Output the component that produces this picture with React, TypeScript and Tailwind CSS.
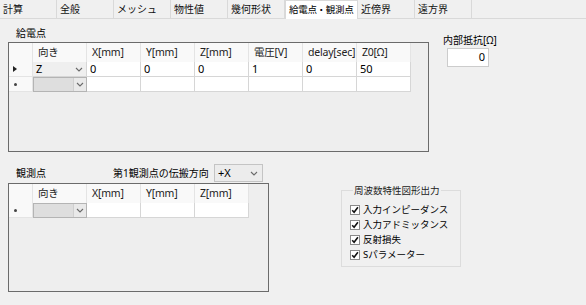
import React from "react";

const FONT = { fontFamily: '"Noto Sans", "Noto Sans CJK JP", sans-serif' };

function Chevron() {
  return (
    <svg width="8" height="5" viewBox="0 0 8 5">
      <path d="M1 1l3 3 3-3" stroke="#6a6a6a" strokeWidth="1.1" fill="none" />
    </svg>
  );
}

function Check() {
  return (
    <svg width="8" height="8" viewBox="0 0 8 8">
      <path d="M1.2 4.2l1.9 2 3.8-5" stroke="#111" strokeWidth="1.6" fill="none" />
    </svg>
  );
}

const tabs = ["計算", "全般", "メッシュ", "物性値", "幾何形状", "給電点・観測点", "近傍界", "遠方界"];

function TabBar() {
  return (
    <div className="flex h-[19px] border-b border-[#d9d9d9]">
      {tabs.map((t, i) =>
        i === 5 ? (
          <div
            key={t}
            className="w-[73px] h-[19px] bg-white border-x border-t border-[#d9d9d9] flex items-center pl-[3px] text-[9.5px] tracking-[-0.3px] whitespace-nowrap text-black relative z-10"
          >
            {t}
          </div>
        ) : (
          <div
            key={t}
            className="w-[57px] h-[18px] bg-[#f0f0f0] border-r border-[#d9d9d9] flex items-center pl-[3px] text-[10px] whitespace-nowrap text-[#111]"
          >
            {t}
          </div>
        )
      )}
    </div>
  );
}

function HeaderCell({ label }: { label: string }) {
  return (
    <div className="w-[54px] h-full bg-[#f9f9f9] border-r border-[#e4e4e4] flex items-center pl-[5px] text-[10.5px] tracking-[-0.2px] text-[#222] whitespace-nowrap overflow-hidden">
      {label}
    </div>
  );
}

function Cell({ v }: { v: string }) {
  return (
    <div className="w-[54px] h-full bg-white border-r border-b border-[#d6d6d6] flex items-center pl-[3px] text-[11px] text-black">
      {v}
    </div>
  );
}

function ComboCell({ v, active }: { v: string; active: boolean }) {
  if (active) {
    return (
      <div className="w-[54px] h-full bg-[#efefef] border-r border-b border-[#d6d6d6] flex items-center justify-between pl-[3px] pr-[3px] text-[11px] text-black">
        <span>{v}</span>
        <Chevron />
      </div>
    );
  }
  return (
    <div className="w-[54px] h-full border border-[#b4b4b4] flex">
      <div className="flex-1 bg-[#dedede]" />
      <div className="w-[13px] bg-[#e9e9e9] border-l border-[#cfcfcf] flex items-center justify-center">
        <Chevron />
      </div>
    </div>
  );
}

function RowHead({ kind }: { kind: "cur" | "new" }) {
  return (
    <div className="w-[24px] h-full bg-[#f9f9f9] border-r border-b border-[#e4e4e4] flex items-center pl-[4px]">
      {kind === "cur" ? (
        <svg width="4" height="6" viewBox="0 0 4 6">
          <path d="M0 0L4 3L0 6Z" fill="#222" />
        </svg>
      ) : (
        <span className="block w-[3px] h-[3px] rounded-full bg-[#444] ml-[1px]" />
      )}
    </div>
  );
}

function GridBody({
  cols,
  rows,
}: {
  cols: string[];
  rows: { kind: "cur" | "new"; vals: string[] }[];
}) {
  return (
    <>
      <div className="flex h-[19px]">
        <div className="w-[24px] h-full bg-[#f9f9f9] border-r border-[#e4e4e4]" />
        {cols.map((c) => (
          <HeaderCell key={c} label={c} />
        ))}
      </div>
      {rows.map((r, i) => (
        <div key={i} className="flex h-[15px]">
          <RowHead kind={r.kind} />
          <ComboCell v={r.vals[0]} active={r.kind === "cur"} />
          {r.vals.slice(1).map((v, j) => (
            <Cell key={j} v={v} />
          ))}
        </div>
      ))}
    </>
  );
}

function CheckRow({ label }: { label: string }) {
  return (
    <div className="flex items-center h-[15px] gap-[3px]">
      <div className="w-[10px] h-[10px] border border-[#8a8a8a] bg-white flex items-center justify-center">
        <Check />
      </div>
      <span className="text-[9.5px] text-black leading-none whitespace-nowrap">{label}</span>
    </div>
  );
}

export default function App() {
  return (
    <div className="w-[586px] h-[305px] bg-[#f0f0f0] overflow-hidden text-black" style={FONT}>
      <TabBar />
      {/* top section */}
      <div className="flex">
        <div className="pl-[8px]">
          <div className="mt-[7px] h-[15px] pl-[8px] flex items-center text-[10px]">給電点</div>
          <div className="mt-[1px] w-[421px] h-[110px] border border-[#6b6b6b] bg-[#eeeeee] overflow-hidden">
            <GridBody
              cols={["向き", "X[mm]", "Y[mm]", "Z[mm]", "電圧[V]", "delay[sec]", "Z0[Ω]"]}
              rows={[
                { kind: "cur", vals: ["Z", "0", "0", "0", "1", "0", "50"] },
                { kind: "new", vals: ["", "", "", "", "", "", ""] },
              ]}
            />
          </div>
        </div>
        <div className="ml-[14px] mt-[14px]">
          <div className="h-[15px] flex items-center text-[10px] whitespace-nowrap">内部抵抗[Ω]</div>
          <div className="ml-[4px] w-[42px] h-[19px] bg-white border border-[#cccccc] flex items-center justify-end pr-[3px] text-[11px]">
            0
          </div>
        </div>
      </div>
      {/* bottom section */}
      <div className="flex">
        <div className="pl-[8px]">
          <div className="mt-[12px] h-[18px] flex items-center">
            <span className="pl-[8px] w-[105px] text-[10px]">観測点</span>
            <span className="w-[101px] text-[10px] whitespace-nowrap">第1観測点の伝搬方向</span>
            <div className="w-[49px] h-[18px] border border-[#c4c4c4] bg-[#ececec] flex items-center justify-between pl-[3px] pr-[4px] text-[11px]">
              <span>+X</span>
              <Chevron />
            </div>
          </div>
          <div className="mt-[1px] w-[261px] h-[109px] border border-[#6b6b6b] bg-[#eeeeee] overflow-hidden">
            <GridBody
              cols={["向き", "X[mm]", "Y[mm]", "Z[mm]"]}
              rows={[{ kind: "new", vals: ["", "", "", ""] }]}
            />
          </div>
        </div>
        <fieldset className="ml-[72px] mt-[31px] w-[120px] h-[84px] border border-[#dcdcdc] pl-[8px] pt-[4px]">
          <legend className="ml-[3px] px-[1px] text-[9.5px] leading-[15px] text-[#222] whitespace-nowrap">周波数特性図形出力</legend>
          <CheckRow label="入力インピーダンス" />
          <CheckRow label="入力アドミッタンス" />
          <CheckRow label="反射損失" />
          <CheckRow label="Sパラメーター" />
        </fieldset>
      </div>
    </div>
  );
}
